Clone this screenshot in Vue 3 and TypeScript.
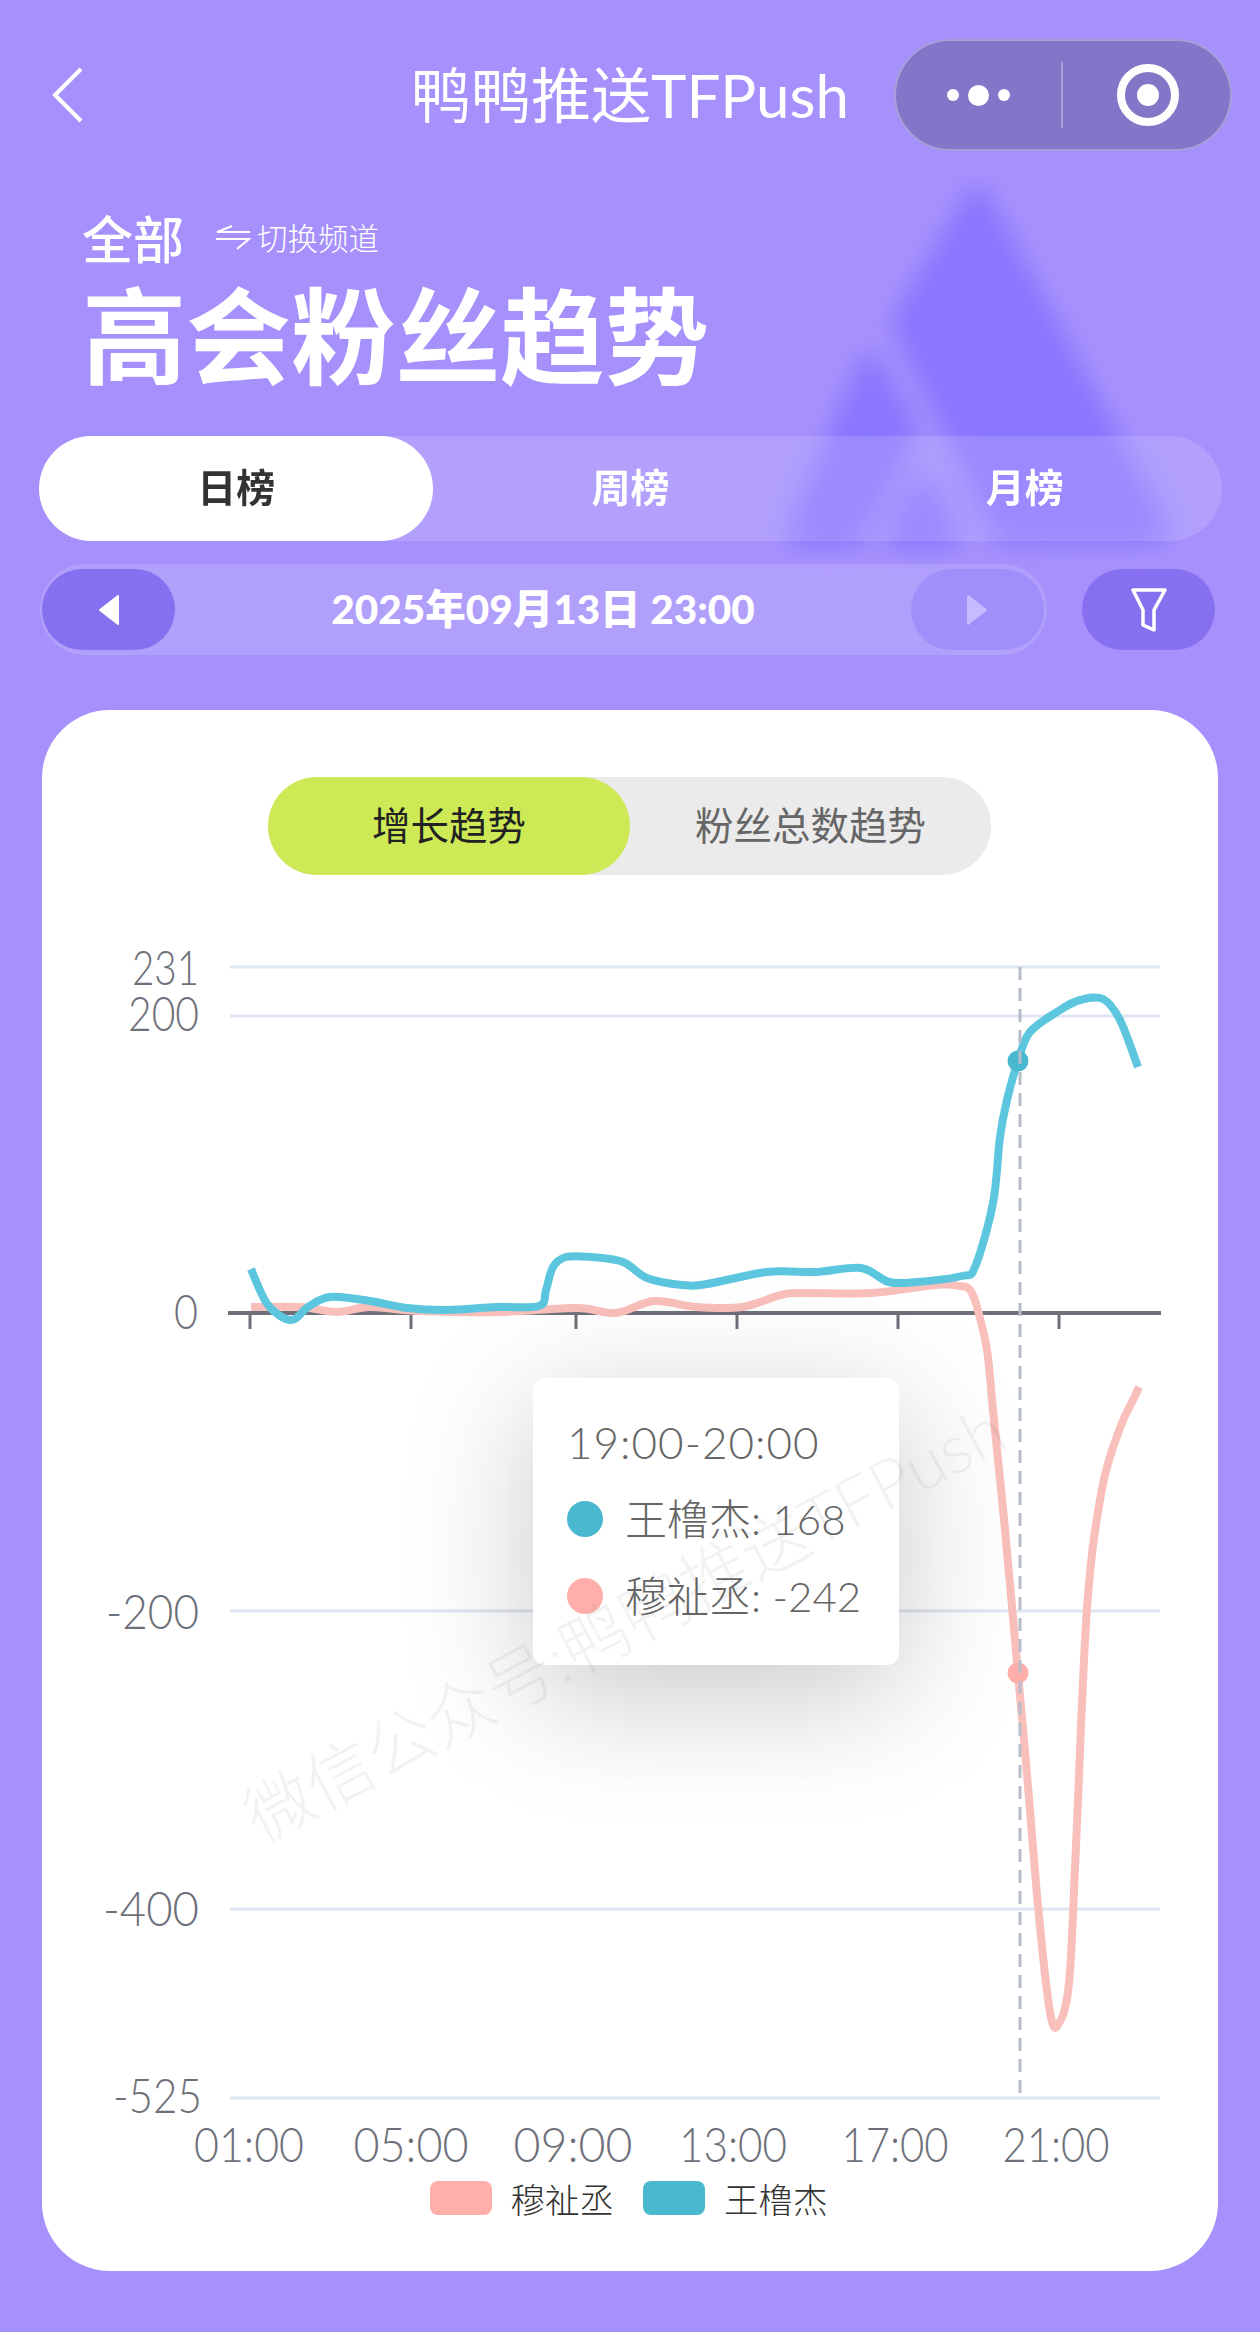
<script setup lang="ts">
import { computed } from "vue";

type Pt = [number, number];

const tealPts: Pt[] = [
  [251, 1269], [268, 1305], [291, 1320], [308, 1307], [330, 1297], [370, 1301], [407, 1308],
  [447, 1310], [497, 1307], [539, 1306], [546, 1290], [553, 1267], [566, 1257], [591, 1257], [623, 1262],
  [647, 1278], [682, 1285], [707, 1284], [767, 1272], [816, 1272], [861, 1268], [889, 1282],
  [917, 1282], [962, 1276], [975, 1267], [993, 1203], [1000, 1137], [1007, 1100], [1018, 1061],
  [1030, 1032], [1060, 1010], [1080, 1000], [1103, 999], [1120, 1020], [1138, 1067],
];

const pinkPts: Pt[] = [
  [251, 1307], [300, 1307], [337, 1312], [370, 1307], [420, 1311], [500, 1312], [577, 1308],
  [616, 1313], [654, 1301], [696, 1307], [742, 1307], [781, 1295], [802, 1293], [872, 1293],
  [935, 1285], [960, 1286], [970, 1290], [977, 1307], [987, 1350], [993, 1410], [1004, 1519],
  [1018, 1673], [1028, 1786], [1039, 1917], [1050, 2012], [1058, 2025], [1069, 1983],
  [1076, 1846], [1087, 1608], [1102, 1489], [1120, 1428], [1133, 1400], [1139, 1387],
];

// catmull-rom through the measured points
function smooth(pts: Pt[]): string {
  let d = `M${pts[0][0]} ${pts[0][1]}`;
  for (let i = 0; i < pts.length - 1; i++) {
    const p0 = pts[Math.max(i - 1, 0)];
    const p1 = pts[i];
    const p2 = pts[i + 1];
    const p3 = pts[Math.min(i + 2, pts.length - 1)];
    const c1x = p1[0] + (p2[0] - p0[0]) / 6;
    const c1y = p1[1] + (p2[1] - p0[1]) / 6;
    const c2x = p2[0] - (p3[0] - p1[0]) / 6;
    const c2y = p2[1] - (p3[1] - p1[1]) / 6;
    d += ` C${c1x.toFixed(1)} ${c1y.toFixed(1)} ${c2x.toFixed(1)} ${c2y.toFixed(1)} ${p2[0]} ${p2[1]}`;
  }
  return d;
}

const tealPath = computed(() => smooth(tealPts));
const pinkPath = computed(() => smooth(pinkPts));

const gridLines = [967, 1016, 1611, 1909, 2098];

// w = label width, the chart font is narrower than anything installed
const yLabels = [
  { t: "231", x: 199, y: 967, w: 67 },
  { t: "200", x: 199, y: 1013, w: 71 },
  { t: "0", x: 198, y: 1311, w: 24 },
  { t: "-200", x: 199, y: 1611, w: 93 },
  { t: "-400", x: 199, y: 1908, w: 96 },
  { t: "-525", x: 202, y: 2095, w: 89 },
];

const ticks = [250, 411, 576, 737, 898, 1059];
const xLabels = [
  { x: 249, t: "01:00", w: 110 },
  { x: 411, t: "05:00", w: 115 },
  { x: 573, t: "09:00", w: 119 },
  { x: 733, t: "13:00", w: 108 },
  { x: 895, t: "17:00", w: 107 },
  { x: 1056, t: "21:00", w: 107 },
];

const tabs = ["日榜", "周榜", "月榜"];
</script>

<template>
  <div class="page">
    <svg class="logo" viewBox="740 160 500 420" width="500" height="420">
      <defs>
        <filter id="soft" x="-20%" y="-20%" width="140%" height="140%">
          <feGaussianBlur stdDeviation="12" />
        </filter>
      </defs>
      <g fill="#8a76ff" stroke="#8a76ff" stroke-width="26" stroke-linejoin="round" filter="url(#soft)">
        <path d="M977 200 L1156 530 L1004 532 L905 322 Z" />
        <path d="M870 368 L905 432 L852 534 L800 534 Z" />
        <path d="M923 488 L948 536 L898 536 Z" />
      </g>
    </svg>

    <header class="nav">
      <svg class="back" width="32" height="56" viewBox="0 0 32 56">
        <path d="M29 2 L3 28 L29 54" fill="none" stroke="#fff" stroke-width="4" />
      </svg>
      <div class="nav-title">鸭鸭推送TFPush</div>
      <div class="capsule">
        <div class="dots">
          <i class="dot" />
          <i class="dot big" />
          <i class="dot" />
        </div>
        <span class="capsule-line" />
        <div class="target"><i /></div>
      </div>
    </header>

    <section class="heading">
      <div class="channel">
        <span class="channel-name">全部</span>
        <svg width="36" height="26" viewBox="0 0 36 26">
          <path d="M35 8 H2 L17 2 M1 15 H34 L22 25" fill="none" stroke="#fff" stroke-width="2" />
        </svg>
        <span class="channel-switch">切换频道</span>
      </div>
      <h1 class="big-title">高会粉丝趋势</h1>
    </section>

    <div class="tabs">
      <div v-for="(t, i) in tabs" :key="t" class="tab" :class="{ active: i === 0 }">{{ t }}</div>
    </div>

    <div class="date-row">
      <div class="date-bar">
        <div class="arrow-btn prev">
          <svg width="22" height="32" viewBox="0 0 22 32">
            <path d="M20 2 V30 L2 16 Z" fill="#fff" stroke="#fff" stroke-width="2" stroke-linejoin="round" />
          </svg>
        </div>
        <div class="date-text">2025年09月13日 23:00</div>
        <div class="arrow-btn off">
          <svg width="22" height="32" viewBox="0 0 22 32">
            <path d="M2 2 V30 L20 16 Z" fill="#c7baff" stroke="#c7baff" stroke-width="2" stroke-linejoin="round" />
          </svg>
        </div>
      </div>
      <div class="filter-btn">
        <svg width="38" height="46" viewBox="0 0 38 46">
          <path
            d="M3 3 H35 L24 23 V43 L13 38 V23 Z"
            fill="none"
            stroke="#fff"
            stroke-width="3.5"
            stroke-linejoin="round"
          />
        </svg>
      </div>
    </div>

    <main class="card">
      <div class="switch">
        <div class="switch-item on">增长趋势</div>
        <div class="switch-item">粉丝总数趋势</div>
      </div>

      <div class="chart">
        <svg class="chart-svg" viewBox="42 940 1176 1240" width="1176" height="1240">
          <line v-for="y in gridLines" :key="y" x1="230" x2="1160" :y1="y" :y2="y" class="grid" />
          <text
            v-for="l in yLabels"
            :key="l.t"
            :x="l.x"
            :y="l.y"
            :textLength="l.w"
            lengthAdjust="spacingAndGlyphs"
            text-anchor="end"
            dominant-baseline="central"
            class="axis-text"
          >{{ l.t }}</text>
          <text
            v-for="l in xLabels"
            :key="l.t"
            :x="l.x"
            y="2144"
            :textLength="l.w"
            lengthAdjust="spacingAndGlyphs"
            text-anchor="middle"
            dominant-baseline="central"
            class="axis-text"
          >{{ l.t }}</text>

          <line x1="228" x2="1161" y1="1313" y2="1313" class="axis" />
          <line v-for="t in ticks" :key="t" :x1="t" :x2="t" y1="1313" y2="1329" class="tick" />

          <path :d="pinkPath" class="series pink" />
          <path :d="tealPath" class="series teal" />

          <circle cx="1018" cy="1061" r="10.5" fill="#4ab8cf" />
          <circle cx="1018" cy="1673" r="10.5" fill="#ffaeaa" />
          <line x1="1020" x2="1020" y1="967" y2="2098" class="pointer" />
        </svg>

        <div class="tooltip">
          <div class="tip-title">19:00-20:00</div>
          <div class="tip-row"><i class="tip-dot teal-bg" /><span>王橹杰: 168</span></div>
          <div class="tip-row"><i class="tip-dot pink-bg" /><span>穆祉丞: -242</span></div>
        </div>

        <div class="watermark">微信公众号:鸭鸭推送TFPush</div>
      </div>

      <div class="legend">
        <i class="swatch pink-bg" />
        <span class="legend-name">穆祉丞</span>
        <i class="swatch teal-bg" />
        <span class="legend-name">王橹杰</span>
      </div>
    </main>
  </div>
</template>

<style>
html,
body {
  margin: 0;
  background: #a691fc;
}
</style>

<style scoped>
.page {
  position: relative;
  width: 1260px;
  height: 2332px;
  overflow: hidden;
  background: #a691fc;
  font-family: Lato, "Noto Sans CJK SC", sans-serif;
  color: #fff;
}

.logo {
  position: absolute;
  left: 740px;
  top: 160px;
}

.nav {
  position: relative;
  display: grid;
  grid-template-columns: 1fr auto 1fr;
  align-items: center;
  height: 112px;
  padding: 39px 28px 0 28px;
}

.back {
  display: block;
  margin-left: 24px;
}

.nav-title {
  font-size: 60px;
  font-weight: 400;
  line-height: 112px;
  white-space: nowrap;
}

.capsule {
  justify-self: end;
  display: flex;
  align-items: center;
  box-sizing: border-box;
  width: 338px;
  height: 112px;
  border: 2px solid rgba(255, 255, 255, 0.3);
  border-radius: 56px;
  background: #8376c8;
}

.dots {
  display: flex;
  align-items: center;
  justify-content: center;
  gap: 9px;
  width: 165px;
}

.dot {
  width: 12px;
  height: 12px;
  border-radius: 50%;
  background: #fff;
}

.dot.big {
  width: 21px;
  height: 21px;
}

.capsule-line {
  width: 2px;
  height: 66px;
  background: rgba(255, 255, 255, 0.3);
}

.target {
  display: flex;
  align-items: center;
  justify-content: center;
  box-sizing: border-box;
  width: 62px;
  height: 62px;
  margin-left: 54px;
  border: 8px solid #fff;
  border-radius: 50%;
}

.target i {
  width: 22px;
  height: 22px;
  border-radius: 50%;
  background: #fff;
}

.heading {
  position: relative;
  padding: 56px 0 0 82px;
}

.channel {
  display: flex;
  align-items: center;
  height: 60px;
}

.channel-name {
  width: 133px;
  font-size: 51px;
  font-weight: 500;
}

.channel svg {
  margin-right: 6px;
}

.channel-switch {
  font-size: 30.5px;
  font-weight: 300;
}

.big-title {
  margin: 11px 0 0;
  font-size: 104.5px;
  font-weight: 700;
  line-height: 116px;
}

.tabs {
  position: relative;
  display: flex;
  width: 1183px;
  height: 105px;
  margin: 42px 0 0 39px;
  border-radius: 53px;
  background: rgba(255, 255, 255, 0.14);
  backdrop-filter: blur(8px);
}

.tab {
  flex: 1;
  font-size: 39px;
  font-weight: 700;
  line-height: 103px;
  text-align: center;
  border-radius: 53px;
}

.tab.active {
  background: #fff;
  color: #333;
}

.date-row {
  position: relative;
  display: flex;
  align-items: center;
  margin: 23px 0 0 40px;
}

.date-bar {
  display: flex;
  align-items: center;
  justify-content: space-between;
  box-sizing: border-box;
  width: 1007px;
  height: 91px;
  border: 3px solid rgba(255, 255, 255, 0.13);
  border-radius: 46px;
  background: rgba(255, 255, 255, 0.13);
  background-clip: padding-box;
}

.arrow-btn,
.filter-btn {
  display: flex;
  align-items: center;
  justify-content: center;
  width: 133px;
  height: 81px;
  border-radius: 41px;
  background: #8670ef;
}

.arrow-btn.prev {
  margin-left: -1px;
}

.arrow-btn.off {
  background: #a08ffa;
}

.date-text {
  padding-bottom: 7px;
  font-size: 40.5px;
  font-weight: 900;
}

.filter-btn {
  margin-left: 35px;
}

.card {
  position: relative;
  box-sizing: border-box;
  width: 1176px;
  height: 1561px;
  margin: 55px 0 0 42px;
  padding-top: 67px;
  border-radius: 68px;
  background: #fff;
}

.switch {
  display: flex;
  width: 723px;
  height: 98px;
  margin: 0 0 0 226px;
  border-radius: 49px;
  background: #ebebeb;
  color: #666;
  font-size: 38.5px;
  line-height: 96px;
}

.switch-item {
  flex: 1;
  text-align: center;
  border-radius: 49px;
}

.switch-item.on {
  flex: 0 0 362px;
  background: #cde956;
  color: #222;
}

.chart {
  position: relative;
  height: 1240px;
  margin-top: 65px;
}

.chart-svg {
  display: block;
}

.grid {
  stroke: #e0e6f1;
  stroke-width: 3;
}

.axis {
  stroke: #6e7079;
  stroke-width: 4;
}

.tick {
  stroke: #6e7079;
  stroke-width: 3;
}

.axis-text {
  fill: #6e7079;
  font-size: 47px;
  font-weight: 300;
}

.series {
  fill: none;
  stroke-width: 8;
}

.series.teal {
  stroke: #5cc6de;
}

.series.pink {
  stroke: #f9bfbb;
}

.pointer {
  stroke: #b8bcc9;
  stroke-width: 3;
  stroke-dasharray: 13 8;
}

.tooltip {
  position: absolute;
  left: 491px;
  top: 438px;
  box-sizing: border-box;
  width: 366px;
  height: 287px;
  padding: 30px 0 0 34px;
  border-radius: 12px;
  background: #fff;
  box-shadow: 0 30px 130px rgba(0, 0, 0, 0.22);
  color: #666;
  font-size: 42px;
  font-weight: 300;
}

.tip-title {
  font-size: 44px;
  letter-spacing: 1px;
  line-height: 68px;
}

.tip-row {
  display: flex;
  align-items: center;
  height: 68px;
  margin-top: 9px;
  white-space: pre;
}

.tip-row:first-of-type {
  margin-top: 11px;
}

.tip-row span {
  margin-bottom: 6px;
}

.tip-dot {
  width: 36px;
  height: 36px;
  margin-right: 22px;
  border-radius: 50%;
}

.teal-bg {
  background: #4ab8cf;
}

.pink-bg {
  background: #ffaeaa;
}

.watermark {
  position: absolute;
  left: 132px;
  top: 647px;
  width: 900px;
  font-size: 68px;
  font-weight: 300;
  line-height: 70px;
  text-align: center;
  color: rgba(0, 0, 0, 0.05);
  white-space: nowrap;
  transform: rotate(-28deg);
}

.legend {
  display: flex;
  align-items: center;
  justify-content: center;
  height: 35px;
  padding-right: 3px;
  color: #333;
  font-size: 34.5px;
  font-weight: 300;
}

.swatch {
  width: 62px;
  height: 34px;
  margin-right: 19px;
  border-radius: 8px;
}

.legend-name {
  margin-right: 29px;
}

.legend-name:last-child {
  margin-right: 0;
}
</style>
